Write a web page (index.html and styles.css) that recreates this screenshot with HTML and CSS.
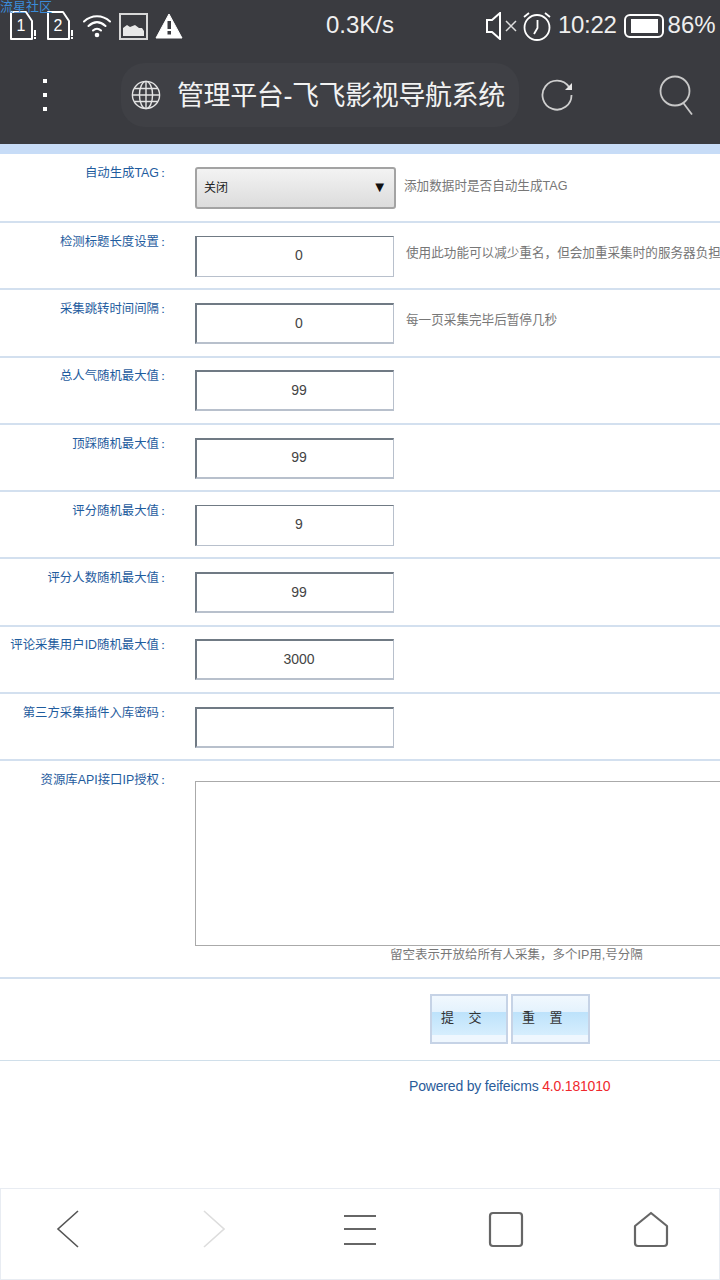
FILE: index.html
```html
<!DOCTYPE html>
<html lang="zh">
<head>
<meta charset="utf-8">
<title>管理平台-飞飞影视导航系统</title>
<link rel="stylesheet" href="styles.css">
</head>
<body>
<div class="phone">
  <header class="chrome">
    <div class="status">
      <div class="status-left">
        <svg width="37" height="32" viewBox="0 0 37 32"><path d="M2 2h15l6 9v18H2z" fill="none" stroke="#fff" stroke-width="2" stroke-linejoin="round"/><rect x="25" y="20" width="2" height="6" fill="#fff"/><rect x="25" y="27" width="2" height="2" fill="#fff"/><text x="12" y="21" class="sim-num">1</text></svg>
        <svg width="37" height="32" viewBox="0 0 37 32"><path d="M2 2h15l6 9v18H2z" fill="none" stroke="#fff" stroke-width="2" stroke-linejoin="round"/><rect x="25" y="20" width="2" height="6" fill="#fff"/><rect x="25" y="27" width="2" height="2" fill="#fff"/><text x="12" y="21" class="sim-num">2</text></svg>
        <svg class="ic-wifi" width="28" height="24" viewBox="0 0 28 24"><path d="M1 7.500C8.500 .5 19.500 .5 27 7.500M5.500 12c5.500-5 11.500-5 17 0M10 16.500c2.500-2.500 5.500-2.500 8 0" fill="none" stroke="#fff" stroke-width="2" stroke-linecap="round"/><circle cx="14" cy="21" r="2.300" fill="#fff"/></svg>
        <svg class="ic-image" width="29" height="27" viewBox="0 0 29 27"><rect x="1" y="1" width="27" height="25" fill="none" stroke="#d8d8d8" stroke-width="2"/><path d="M4 23v-8l4-3 3 2 5-2 4 3 3 0 2 3v5z" fill="#e8e8e8"/></svg>
        <svg width="28" height="26" viewBox="0 0 28 26"><path d="M14 1L27 25H1z" fill="#fff" stroke="#fff" stroke-linejoin="round"/><rect x="12.500" y="8" width="3.500" height="8" fill="#3a3b40"/><rect x="12.500" y="18" width="3.500" height="3.500" fill="#3a3b40"/></svg>
      </div>
      <div class="speed">0.3K/s</div>
      <div class="status-right">
        <svg width="32" height="28" viewBox="0 0 32 28"><path d="M1 8h5l8-7v26l-8-7H1z" fill="none" stroke="#fff" stroke-width="2"/><path d="M20 9l10 10M30 9L20 19" stroke="#ddd" stroke-width="1.500"/></svg>
        <svg width="30" height="30" viewBox="0 0 30 30"><circle cx="15" cy="16.500" r="12.500" fill="none" stroke="#fff" stroke-width="1.800"/><path d="M15.500 9v8l-3.500 6" fill="none" stroke="#fff" stroke-width="1.800"/><path d="M2 6l5-4M28 6l-5-4" stroke="#fff" stroke-width="1.800"/></svg>
        <span class="clock">10:22</span>
        <svg width="40" height="24" viewBox="0 0 40 24"><rect x="1" y="1" width="38" height="22" rx="5" fill="none" stroke="#fff" stroke-width="2"/><rect x="7" y="5" width="27" height="14" fill="#fff"/></svg>
        <span class="battery">86%</span>
      </div>
    </div>
    <div class="toolbar">
      <div class="menu-dots"><i></i><i></i><i></i></div>
      <div class="address">
        <svg width="30" height="30" viewBox="0 0 32 32" fill="none" stroke="#e4e4e4" stroke-width="1.500"><circle cx="16" cy="16" r="14.500"/><ellipse cx="16" cy="16" rx="7" ry="14.500"/><path d="M16 1.500v29M1.500 16h29M3.500 9h25M3.500 23h25"/></svg>
        <span class="page-title">管理平台-飞飞影视导航系统</span>
      </div>
      <svg class="reload" width="32" height="32" viewBox="0 0 32 32" fill="none"><path d="M28 8A14.500 14.500 0 1 0 30.500 16" stroke="#cfcfcf" stroke-width="1.800"/><path d="M31 4v7h-7z" fill="#e8e8e8"/></svg>
      <svg class="search" width="36" height="40" viewBox="0 0 36 40" fill="none" stroke="#c8c8c8" stroke-width="1.800"><circle cx="16" cy="16" r="14.500"/><path d="M24 27.500l9 12"/></svg>
    </div>
  </header>
  <div class="band"></div>

  <main class="form">
    <div class="row row-a">
      <label class="lbl">自动生成TAG<span class="colon">：</span></label>
      <div class="fake-select"><span>关闭</span><b>▼</b></div>
      <span class="hint hint-a">添加数据时是否自动生成TAG</span>
    </div>
    <div class="row">
      <label class="lbl">检测标题长度设置<span class="colon">：</span></label>
      <div class="field field-thin">0</div>
      <span class="hint">使用此功能可以减少重名，但会加重采集时的服务器负担</span>
    </div>
    <div class="row">
      <label class="lbl">采集跳转时间间隔<span class="colon">：</span></label>
      <div class="field">0</div>
      <span class="hint">每一页采集完毕后暂停几秒</span>
    </div>
    <div class="row"><label class="lbl">总人气随机最大值<span class="colon">：</span></label><div class="field">99</div></div>
    <div class="row"><label class="lbl">顶踩随机最大值<span class="colon">：</span></label><div class="field">99</div></div>
    <div class="row"><label class="lbl">评分随机最大值<span class="colon">：</span></label><div class="field field-thin">9</div></div>
    <div class="row"><label class="lbl">评分人数随机最大值<span class="colon">：</span></label><div class="field">99</div></div>
    <div class="row"><label class="lbl">评论采集用户ID随机最大值<span class="colon">：</span></label><div class="field">3000</div></div>
    <div class="row"><label class="lbl">第三方采集插件入库密码<span class="colon">：</span></label><div class="field"></div></div>
    <div class="row row-area">
      <label class="lbl">资源库API接口IP授权<span class="colon">：</span></label>
      <div class="area-col">
        <div class="area"></div>
        <div class="area-hint">留空表示开放给所有人采集，多个IP用,号分隔</div>
      </div>
    </div>
    <div class="row-buttons">
      <div class="btn">提&nbsp;&nbsp;&nbsp;&nbsp;交</div>
      <div class="btn">重&nbsp;&nbsp;&nbsp;&nbsp;置</div>
    </div>
    <div class="powered">Powered by feifeicms <em>4.0.181010</em></div>
  </main>

  <nav class="bottom">
    <svg width="24" height="40" viewBox="0 0 24 40" fill="none" stroke="#555" stroke-width="1.600"><path d="M23 2L3 20l20 18"/></svg>
    <svg width="24" height="40" viewBox="0 0 24 40" fill="none" stroke="#ddd" stroke-width="1.600"><path d="M3 2l20 18L3 38"/></svg>
    <svg width="36" height="32" viewBox="0 0 36 32" fill="none" stroke="#666" stroke-width="2"><path d="M2 3h32M2 16h32M2 31h32"/></svg>
    <svg width="36" height="38" viewBox="0 0 36 38" fill="none" stroke="#666" stroke-width="2.200"><rect x="2" y="3" width="32" height="33" rx="3"/></svg>
    <svg width="36" height="38" viewBox="0 0 36 38" fill="none" stroke="#666" stroke-width="2.200" stroke-linejoin="round"><path d="M18 3L34 16v17a3 3 0 0 1-3 3H5a3 3 0 0 1-3-3V16z"/></svg>
  </nav>
  <a class="overlay-link">流星社区</a>
</div>
</body>
</html>
```
FILE: styles.css
```css
* { box-sizing: border-box; }
html, body { margin: 0; padding: 0; background: #fff; }
body { font-family: "Liberation Sans", "Noto Sans CJK SC", sans-serif; }
.phone { position: relative; width: 720px; height: 1280px; overflow: hidden; display: flex; flex-direction: column; }
.chrome { height: 144px; background: #3a3b40; color: #fff; flex: none; }
.status { height: 50px; display: flex; align-items: center; padding: 2px 0 0 9px; }
.status-left { display: flex; align-items: center; width: 317px; flex: none; }
.ic-wifi { margin-right: 8px; }
.ic-image { margin-right: 7px; }
.sim-num { fill: #fff; font-size: 16px; text-anchor: middle; font-family: "Liberation Sans", sans-serif; }
.speed { font-size: 24px; width: 160px; flex: none; color: #f0f0f0; margin-top: -2px; }
.status-right { display: flex; align-items: center; gap: 4px; font-size: 24px; color: #eee; }
.status-right span { margin-top: -2px; }
.clock { margin: 0 3px 0 2px; letter-spacing: -.3px; }
.toolbar { height: 94px; display: flex; align-items: center; padding: 0 0 4px 43px; }
.menu-dots { display: flex; flex-direction: column; gap: 10px; width: 78px; flex: none; }
.menu-dots i { width: 4px; height: 4px; background: #fff; display: block; }
.address { width: 398px; height: 64px; border-radius: 24px; background: #3f4045; display: flex; align-items: center; padding-left: 10px; flex: none; }
.page-title { font-size: 27px; margin: -4px 0 0 16px; color: #f2f2f2; white-space: nowrap; letter-spacing: -.4px; }
.reload { margin-left: 22px; flex: none; }
.search { margin-left: 86px; flex: none; }
.band { height: 10px; background: #c7dcf7; flex: none; }
.form { flex: 1; min-height: 0; overflow: hidden; }
.row { height: 67.250px; border-bottom: 2px solid #d3e0ef; display: flex; align-items: flex-start; padding-top: 12.750px; white-space: nowrap; overflow: hidden; }
.row-a { height: 69px; padding-top: 13px; }
.lbl { width: 169px; margin: -2px 26px 0 0; text-align: right; flex: none; color: #1f5c9e; font-size: 12.400px; line-height: 16px; }
.colon { display: inline-block; width: 12.500px; margin-left: -2.500px; text-align: left; font-family: "Liberation Sans", sans-serif; }
.fake-select { width: 201px; height: 42px; border: 2px solid #a3a3a3; border-radius: 3px; background: linear-gradient(#f3f3f3, #dcdcdc); display: flex; align-items: center; justify-content: space-between; padding: 0 7px 4px 7px; font-size: 12px; color: #222; flex: none; }
.fake-select b { font-size: 15px; font-weight: 400; color: #111; }
.field { width: 199px; height: 41px; border-style: solid; border-width: 2px 1px 2px 2px; border-color: #707a84 #b8c0cc #b8c0cc #707a84; font-size: 14px; color: #444; display: flex; align-items: center; justify-content: center; padding: 0 0 2px 8px; flex: none; }
.field-thin { border-width: 1px 1px 1px 2px; }
.hint { color: #777; font-size: 12.600px; line-height: 18px; margin: 8px 0 0 12px; }
.hint-a { margin: 10px 0 0 8px; }
.row-area { height: 217.500px; padding-top: 20px; }
.row-area .lbl { margin-top: -9px; }
.area-col { flex: 1; min-width: 0; }
.area { width: 560px; height: 165px; border: 1px solid #aaa; }
.area-hint { color: #777; font-size: 12.500px; line-height: 18px; margin-left: 195px; }
.row-buttons { height: 82px; border-bottom: 1px solid #d0dfea; display: flex; gap: 3px; padding: 15px 0 0 430px; }
.btn { width: 78px; height: 50px; border: 2px solid #c6d3e6; background: linear-gradient(#f1f8fe 0, #e4f2fd 35%, #bde2fb 35.500%, #d6eefd 84%, #eff7fe 84.500%); color: #333; font-size: 13px; display: flex; align-items: center; padding: 0 0 4px 9px; }
.btn + .btn { width: 79px; }
.powered { margin: 17px 0 0 409px; color: #2a5c9a; font-size: 14px; line-height: 17px; letter-spacing: -.18px; }
.powered em { font-style: normal; color: #f0282d; }
.bottom { height: 92px; flex: none; border: 1px solid #e8ecf2; display: flex; align-items: center; background: #fff; padding: 0 0 10px 54px; }
.bottom svg:nth-child(1) { margin-right: 122px; }
.bottom svg:nth-child(2) { margin-right: 117px; }
.bottom svg:nth-child(3) { margin-right: 110px; }
.bottom svg:nth-child(4) { margin-right: 109px; }
.overlay-link { position: absolute; left: 0; top: 0; color: #3a8bd8; font-size: 13px; line-height: 13px; }
```
